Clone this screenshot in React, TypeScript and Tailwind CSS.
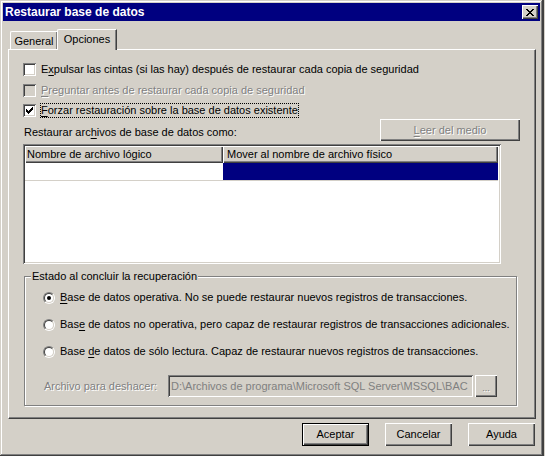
import React from "react";

const btnRaised =
  "bg-[#d4d0c8] shadow-[inset_1px_1px_#ffffff,inset_-1px_-1px_#404040,inset_-2px_-2px_#808080]";
const sunken =
  "shadow-[inset_1px_1px_#808080,inset_-1px_-1px_#ffffff,inset_2px_2px_#404040,inset_-2px_-2px_#d4d0c8]";
const disabledText = "text-[#808080] [text-shadow:1px_1px_0_#ffffff]";

function Check() {
  const px: [number, number][] = [
    [6, 0],
    [5, 1], [6, 1],
    [0, 2], [4, 2], [5, 2], [6, 2],
    [0, 3], [1, 3], [3, 3], [4, 3], [5, 3],
    [0, 4], [1, 4], [2, 4], [3, 4], [4, 4],
    [1, 5], [2, 5], [3, 5],
    [2, 6],
  ];
  return (
    <svg width="7" height="7" viewBox="0 0 7 7" shapeRendering="crispEdges">
      {px.map(([x, y], i) => (
        <rect key={i} x={x} y={y} width="1" height="1" fill="#000" />
      ))}
    </svg>
  );
}

function CloseGlyph() {
  const rows = ["xx....xx", ".xx..xx.", "..xxxx..", "...xx...", "..xxxx..", ".xx..xx.", "xx....xx"];
  const rects: React.ReactElement[] = [];
  rows.forEach((r, y) =>
    r.split("").forEach((c, x) => {
      if (c === "x") rects.push(<rect key={`${x}-${y}`} x={x} y={y} width="1" height="1" fill="#000" />);
    })
  );
  return (
    <svg width="8" height="7" viewBox="0 0 8 7" shapeRendering="crispEdges">
      {rects}
    </svg>
  );
}

function CheckBox({ checked, disabled }: { checked?: boolean; disabled?: boolean }) {
  return (
    <div
      className={`w-[13px] h-[13px] shrink-0 flex items-center justify-center ${sunken} ${
        disabled ? "bg-[#d4d0c8]" : "bg-white"
      }`}
    >
      {checked && <Check />}
    </div>
  );
}

function Radio({ checked }: { checked?: boolean }) {
  return (
    <div className="w-[12px] h-[12px] shrink-0 rounded-full border border-t-[#808080] border-l-[#808080] border-r-white border-b-white">
      <div className="w-full h-full rounded-full bg-white border border-t-[#404040] border-l-[#404040] border-r-[#d4d0c8] border-b-[#d4d0c8] flex items-center justify-center">
        {checked && <div className="w-[4px] h-[4px] rounded-full bg-black" />}
      </div>
    </div>
  );
}

function U({ children }: { children: React.ReactNode }) {
  return <span className="underline underline-offset-[2px] decoration-1">{children}</span>;
}

export default function App() {
  return (
    <div className="w-[545px] h-[458px] bg-[#d4d0c8] relative overflow-hidden font-['Liberation_Sans',Arial,sans-serif] text-[11px] leading-[13px] text-black">
      <div className="w-[543px] h-[456px] bg-[#d4d0c8] p-[3px] flex flex-col shadow-[inset_-1px_-1px_#404040,inset_1px_1px_#d4d0c8,inset_-2px_-2px_#808080,inset_2px_2px_#ffffff]">
        {/* Title bar */}
        <div className="h-[18px] bg-[#000080] flex items-center justify-between pl-[2px] pr-[2px] shrink-0">
          <span className="text-white font-bold text-[12px] leading-[14px]">Restaurar base de datos</span>
          <div className={`w-[16px] h-[14px] flex items-center justify-center ${btnRaised}`}>
            <CloseGlyph />
          </div>
        </div>

        {/* Tabs */}
        <div className="mt-[8px] ml-[5px] h-[20px] flex items-end pl-[2px] shrink-0">
          <div className="w-[48px] h-[18px] border-t border-l border-white border-r border-r-[#404040] shadow-[inset_-1px_0_#808080] rounded-tl-[2px] flex items-center justify-center pt-[1px]">
            General
          </div>
          <div className="relative z-10 ml-[-1px] mb-[-1px] w-[60px] h-[21px] bg-[#d4d0c8] border-t border-l border-white border-r border-r-[#404040] shadow-[inset_-1px_0_#808080] rounded-tl-[2px] flex items-start justify-center pt-[3px]">
            Opciones
          </div>
        </div>

        {/* Panel */}
        <div className="ml-[5px] w-[528px] h-[370px] shrink-0 border border-t-white border-l-white border-r-[#404040] border-b-[#404040] shadow-[inset_-1px_-1px_#808080] pl-[14px] pr-[15px] pt-[13px] flex flex-col">
          <div className="flex items-center h-[13px] gap-[5px]">
            <CheckBox />
            <span>
              E<U>x</U>pulsar las cintas (si las hay) después de restaurar cada copia de seguridad
            </span>
          </div>
          <div className="flex items-center h-[13px] gap-[5px] mt-[8px]">
            <CheckBox disabled />
            <span className={disabledText}>
              <U>P</U>reguntar antes de restaurar cada copia de seguridad
            </span>
          </div>
          <div className="flex items-center h-[13px] gap-[4px] mt-[7px]">
            <CheckBox checked />
            <span className="border border-dotted border-black leading-[13px]">
              <U>F</U>orzar restauración sobre la base de datos existente
            </span>
          </div>
          <div className="flex h-[22px] mt-[2px]">
            <span className="flex-1 self-end pb-[2px] pl-[1px]">
              Restaurar arc<U>h</U>ivos de base de datos como:
            </span>
            <div className={`w-[140px] h-[22px] flex items-center justify-center ${btnRaised} ${disabledText}`}>
              <span>
                <U>L</U>eer del medio
              </span>
            </div>
          </div>

          {/* List */}
          <div className={`mt-[3px] w-[478px] h-[120px] bg-white p-[2px] ${sunken}`}>
            <div className="flex h-[17px]">
              <div className={`w-[198px] h-full pl-[2px] flex items-center ${btnRaised}`}>Nombre de archivo lógico</div>
              <div className={`w-[275px] h-full pl-[4px] flex items-center ${btnRaised}`}>
                Mover al nombre de archivo físico
              </div>
            </div>
            <div className="flex h-[18px] border-b border-[#d4d0c8] w-[473px]">
              <div className="w-[198px] h-full bg-white" />
              <div className="w-[275px] h-full bg-[#000080]" />
            </div>
          </div>

          {/* Group box */}
          <div className="relative mt-[12px] ml-[1px] w-[493px] h-[130px] border border-[#808080] shadow-[inset_1px_1px_#ffffff,1px_1px_#ffffff] pl-[18px] pt-[14px] flex flex-col">
            <span className="absolute top-[-7px] left-[6px] bg-[#d4d0c8] px-[1px]">
              Estado al concluir la recuperación
            </span>
            <div className="flex items-center h-[13px] gap-[5px]">
              <Radio checked />
              <span>
                <U>B</U>ase de datos operativa. No se puede restaurar nuevos registros de transacciones.
              </span>
            </div>
            <div className="flex items-center h-[13px] gap-[5px] mt-[14px]">
              <Radio />
              <span>
                Bas<U>e</U> de datos no operativa, pero capaz de restaurar registros de transacciones adicionales.
              </span>
            </div>
            <div className="flex items-center h-[13px] gap-[5px] mt-[14px]">
              <Radio />
              <span>
                Base <U>d</U>e datos de sólo lectura. Capaz de restaurar nuevos registros de transacciones.
              </span>
            </div>
            <div className="flex items-center h-[22px] mt-[17px]">
              <span className={`w-[125px] pl-[1px] ${disabledText}`}>Archivo para deshacer:</span>
              <div className={`w-[305px] h-[22px] bg-[#d4d0c8] ${sunken} flex items-center pl-[3px] overflow-hidden whitespace-nowrap text-[#808080]`}>
                <span>D:\Archivos de programa\Microsoft SQL Server\MSSQL\BAC</span>
              </div>
              <div className={`ml-[2px] w-[22px] h-[22px] flex items-end justify-center pb-[4px] ${btnRaised} ${disabledText} text-[9px] leading-[9px]`}>
                ...
              </div>
            </div>
          </div>
        </div>

        {/* Buttons */}
        <div className="flex justify-end gap-[16px] mt-[4px] mr-[5px] shrink-0">
          <div className="w-[67px] h-[23px] border border-black">
            <div className={`w-full h-full flex items-center justify-center ${btnRaised}`}>Aceptar</div>
          </div>
          <div className={`w-[67px] h-[23px] flex items-center justify-center ${btnRaised}`}>Cancelar</div>
          <div className={`w-[67px] h-[23px] flex items-center justify-center ${btnRaised}`}>Ayuda</div>
        </div>
      </div>
      <div className="absolute right-0 top-0 w-[2px] h-[456px] border-l border-[#404040] bg-[#d4d0c8]" />
      <div className="absolute left-0 bottom-0 w-[545px] h-[2px] bg-white" />
    </div>
  );
}
